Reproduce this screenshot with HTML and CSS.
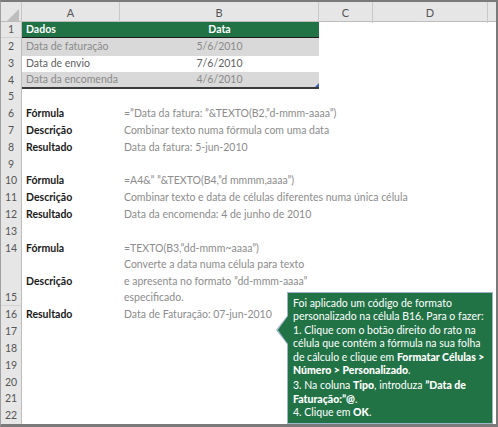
FILE: index.html
```html
<!DOCTYPE html>
<html lang="pt">
<head>
  <meta charset="UTF-8">
  <title>Formato personalizado</title>
  <link rel="stylesheet" href="styles.css">
</head>
<body>
  <div class="sheet">
    <div class="row head">
      <div class="corner"></div>
      <div class="col">A</div>
      <div class="col">B</div>
      <div class="col">C</div>
      <div class="col">D</div>
      <div class="col last"></div>
    </div>

    <div class="row r1">
      <div class="num">1</div>
      <div class="cell title">Dados</div>
      <div class="cell title center">Data</div>
    </div>
    <div class="row band">
      <div class="num">2</div>
      <div class="cell">Data de faturação</div>
      <div class="cell center">5/6/2010</div>
    </div>
    <div class="row plain">
      <div class="num">3</div>
      <div class="cell">Data de envio</div>
      <div class="cell center">7/6/2010</div>
    </div>
    <div class="row band r4">
      <div class="num">4</div>
      <div class="cell">Data da encomenda</div>
      <div class="cell center">4/6/2010<span class="handle"></span></div>
    </div>
    <div class="row"><div class="num">5</div></div>

    <div class="row">
      <div class="num">6</div>
      <div class="cell label">Fórmula</div>
      <div class="cell note">=”Data da fatura: ”&amp;TEXTO(B2,”d-mmm-aaaa”)</div>
    </div>
    <div class="row">
      <div class="num">7</div>
      <div class="cell label">Descrição</div>
      <div class="cell note">Combinar texto numa fórmula com uma data</div>
    </div>
    <div class="row">
      <div class="num">8</div>
      <div class="cell label">Resultado</div>
      <div class="cell note">Data da fatura: 5-jun-2010</div>
    </div>
    <div class="row"><div class="num">9</div></div>

    <div class="row">
      <div class="num">10</div>
      <div class="cell label">Fórmula</div>
      <div class="cell note">=A4&amp;” ”&amp;TEXTO(B4,”d mmmm,aaaa”)</div>
    </div>
    <div class="row">
      <div class="num">11</div>
      <div class="cell label">Descrição</div>
      <div class="cell note">Combinar texto e data de células diferentes numa única célula</div>
    </div>
    <div class="row">
      <div class="num">12</div>
      <div class="cell label">Resultado</div>
      <div class="cell note">Data da encomenda: 4 de junho de 2010</div>
    </div>
    <div class="row"><div class="num">13</div></div>

    <div class="row">
      <div class="num">14</div>
      <div class="cell label">Fórmula</div>
      <div class="cell note">=TEXTO(B3,”dd-mmm~aaaa”)</div>
    </div>
    <div class="row tall">
      <div class="num bottom">15</div>
      <div class="cell label middle">Descrição</div>
      <div class="cell note wrap">Converte a data numa célula para texto<br>e apresenta no formato ”dd-mmm-aaaa”<br>especificado.</div>
    </div>
    <div class="row">
      <div class="num">16</div>
      <div class="cell label">Resultado</div>
      <div class="cell note">Data de Faturação: 07-jun-2010</div>
    </div>
    <div class="row"><div class="num">17</div></div>
    <div class="row"><div class="num">18</div></div>
    <div class="row"><div class="num">19</div></div>
    <div class="row"><div class="num">20</div></div>
    <div class="row"><div class="num">21</div></div>
    <div class="row"><div class="num">22</div></div>

    <div class="callout">
      <p>Foi aplicado um código de formato<br>
      personalizado na célula B16. Para o fazer:<br>
      1. Clique com o botão direito do rato na<br>
      célula que contém a fórmula na sua folha<br>
      de cálculo e clique em <b>Formatar Células &gt;</b><br>
      <b>Número &gt; Personalizado</b>.</p>
      <p>3. Na coluna <b>Tipo</b>, introduza <b>”Data de</b><br>
      <b>Faturação:”@</b>.<br>
      4. Clique em <b>OK</b>.</p>
    </div>
  </div>
</body>
</html>
```

FILE: styles.css
```css
* {
  box-sizing: border-box;
}

body {
  margin: 0;
  background: #ffffff;
  font-family: 'Lato', 'Liberation Sans', sans-serif;
}

.sheet {
  position: relative;
  width: 498px;
  height: 427px;
  border: 2px solid #7a7a7a;
  border-left: 1px solid #a0a0a0;
  border-bottom-width: 3px;
  overflow: hidden;
  background: #ffffff;
}

.row {
  display: grid;
  grid-template-columns: 21px 98px 199px 54px 115px 1fr;
  height: 16.8px;
  font-size: 10.5px;
  line-height: 16.8px;
}

/* column headers */
.head {
  height: 20px;
  line-height: 21px;
  background: #e6e6e6;
  border-bottom: 1px solid #bcbcbc;
  font-size: 11px;
}

.corner {
  position: relative;
  border-right: 1px solid #c6c6c6;
}

.corner::after {
  content: '';
  position: absolute;
  right: 2px;
  bottom: 2px;
  border-left: 12px solid transparent;
  border-bottom: 12px solid #bdbdbd;
}

.col {
  text-align: center;
  color: #555555;
  border-right: 1px solid #c8c8c8;
}

.col.last {
  border-right: none;
}

/* row headers */
.num {
  background: #e6e6e6;
  color: #555555;
  text-align: center;
  font-size: 10.5px;
  border-right: 1px solid #bcbcbc;
  border-bottom: 1px solid #d2d2d2;
}

.num.bottom {
  display: flex;
  align-items: flex-end;
  justify-content: center;
  line-height: 16.8px;
}

/* cells */
.cell {
  padding-left: 4px;
  white-space: nowrap;
  color: #808080;
}

.center {
  text-align: center;
  padding-left: 0;
}

.r1 {
  height: 16px;
  line-height: 15px;
}

.r1 .cell {
  background: #217346;
  color: #ffffff;
  font-weight: bold;
  border-bottom: 1px solid #1c1c1c;
}

.band .cell {
  background: #d9d9d9;
  color: #8a8a8a;
}

.plain .cell {
  color: #5f5f5f;
}

.r4 .cell {
  position: relative;
  border-bottom: 2px solid #3a3a3a;
  line-height: 15px;
}

.handle {
  position: absolute;
  right: 0;
  bottom: 0;
  border-left: 4px solid transparent;
  border-bottom: 4px solid #3b5fc0;
}

.label {
  color: #1a1a1a;
  font-weight: bold;
}

.note {
  color: #8c8c8c;
}

.tall {
  height: 50px;
}

.label.middle {
  align-self: center;
}

.wrap {
  line-height: 16.5px;
}

/* comment box */
.callout {
  position: absolute;
  left: 286px;
  top: 290px;
  width: 206px;
  height: 132px;
  padding: 4px 5px;
  background: #217346;
  border: 1px solid #9fb3cc;
  color: #ffffff;
  font-size: 10.5px;
  line-height: 13.4px;
  white-space: nowrap;
}

.callout::before,
.callout::after {
  content: '';
  position: absolute;
  top: 23px;
  border-top: 14px solid transparent;
  border-bottom: 14px solid transparent;
}

.callout::before {
  left: -12px;
  border-right: 11px solid #9fb3cc;
}

.callout::after {
  left: -10px;
  border-right: 10px solid #217346;
}

.callout p {
  margin: 0 0 2px;
}

.callout b {
  font-weight: 900;
}
```
